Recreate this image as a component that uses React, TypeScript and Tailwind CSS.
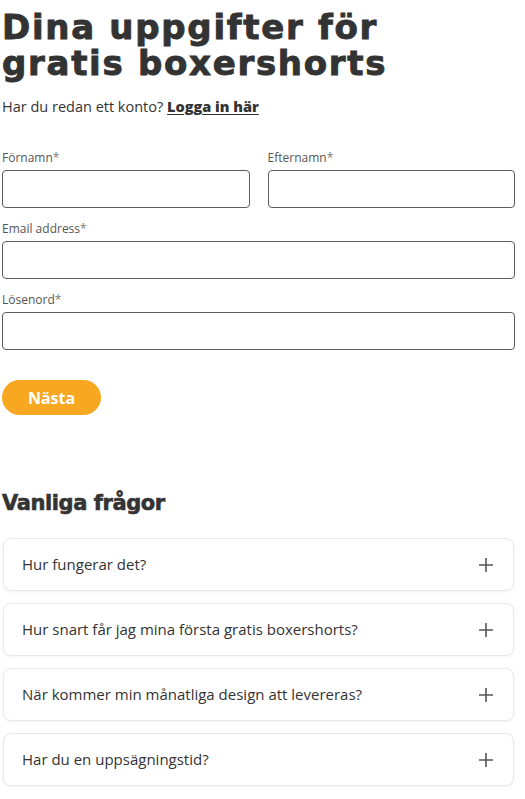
const faqs = [
  "Hur fungerar det?",
  "Hur snart får jag mina första gratis boxershorts?",
  "När kommer min månatliga design att levereras?",
  "Har du en uppsägningstid?",
];

function Field({ label }: { label: string }) {
  return (
    <label className="flex flex-col">
      <span className="text-[12px] leading-[16px] text-[#555]">
        {label}
        <span className="text-[#777]">*</span>
      </span>
      <input
        type="text"
        className="mt-[4px] h-[38px] w-full rounded-[4px] border border-[#5c5c5c] bg-white px-3 text-[14px] outline-none"
      />
    </label>
  );
}

function Plus() {
  return (
    <svg width="16" height="16" viewBox="0 0 16 16" className="shrink-0 text-[#555]">
      <path d="M8 1v14M1 8h14" stroke="currentColor" strokeWidth="1.6" fill="none" />
    </svg>
  );
}

export default function App() {
  return (
    <div
      className="min-h-[799px] bg-white pl-[2px] pr-[10px] text-[#333]"
      style={{ fontFamily: "'Open Sans', 'Noto Sans', sans-serif" }}
    >
      <h1
        className="pt-[9px] text-[34px] font-bold leading-[36px] tracking-[0.05em] text-[#333] [-webkit-text-stroke:0.9px_#333]"
        style={{ fontFamily: "'DejaVu Sans', sans-serif" }}
      >
        Dina uppgifter för
        <br />
        gratis boxershorts
      </h1>
      <p className="mt-[16px] text-[14.5px] leading-[20px]">
        Har du redan ett konto?{" "}
        <a href="#" className="font-extrabold underline underline-offset-2">
          Logga in här
        </a>
      </p>

      <form className="mt-[33px] flex flex-col gap-[13px]">
        <div className="grid grid-cols-2 gap-[18px]">
          <Field label="Förnamn" />
          <Field label="Efternamn" />
        </div>
        <Field label="Email address" />
        <Field label="Lösenord" />
        <button
          type="button"
          className="mt-[17px] flex h-[35px] w-[99px] items-center justify-center rounded-full bg-[#f8a820] text-[16px] font-bold text-white"
        >
          Nästa
        </button>
      </form>

      <h2
        className="mt-[74px] text-[21px] font-bold leading-[28px] tracking-[-0.02em] text-[#333] [-webkit-text-stroke:0.6px_#333]"
        style={{ fontFamily: "'DejaVu Sans', sans-serif" }}
      >
        Vanliga frågor
      </h2>

      <div className="mt-[21px] flex flex-col gap-[12px] pl-[1px] pr-[1px]">
        {faqs.map((q) => (
          <div
            key={q}
            className="flex h-[53px] items-center justify-between rounded-[8px] border border-[#e8e8e8] bg-white pl-[18px] pr-[19px] shadow-[0_1px_3px_rgba(0,0,0,0.05)]"
          >
            <span className="text-[15px] text-[#333]">{q}</span>
            <Plus />
          </div>
        ))}
      </div>
    </div>
  );
}
